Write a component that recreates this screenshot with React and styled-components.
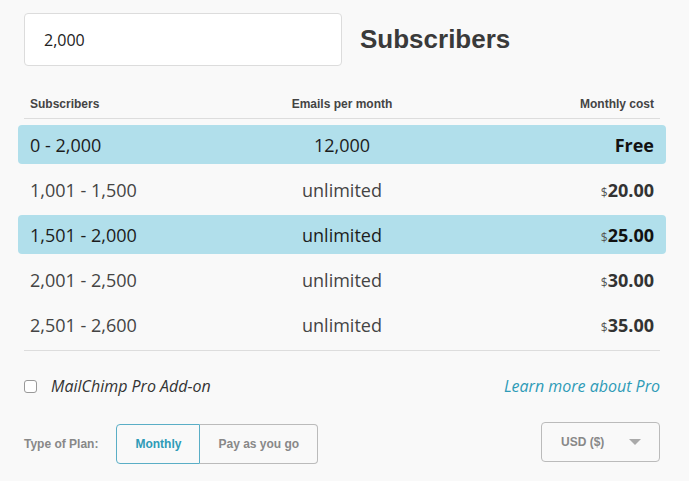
import React from "react";
import styled, { createGlobalStyle } from "styled-components";

const GlobalStyle = createGlobalStyle`
  body {
    margin: 0;
    background: #f9f9f9;
    font-family: "Open Sans", "Noto Sans", sans-serif;
    color: #333;
  }
`;

const plans = [
  { range: "0 - 2,000", emails: "12,000", cost: null, active: true },
  { range: "1,001 - 1,500", emails: "unlimited", cost: "20.00" },
  { range: "1,501 - 2,000", emails: "unlimited", cost: "25.00", active: true },
  { range: "2,001 - 2,500", emails: "unlimited", cost: "30.00" },
  { range: "2,501 - 2,600", emails: "unlimited", cost: "35.00" },
];

const Page = styled.div`
  width: 636px;
  padding: 13px 0 0 24px;
`;

const TopRow = styled.div`
  display: flex;
  align-items: center;
  gap: 18px;
`;

const CountInput = styled.input`
  box-sizing: border-box;
  width: 318px;
  height: 53px;
  padding: 0 19px;
  border: 1px solid #dcdcdc;
  border-radius: 4px;
  background: #fff;
  font-family: "Open Sans", sans-serif;
  font-size: 16px;
  color: #222;
  outline: none;
`;

const Title = styled.h1`
  margin: 0;
  font-family: "Liberation Sans", Arial, sans-serif;
  font-size: 26px;
  font-weight: bold;
  color: #3a3a3a;
`;

const Grid = styled.div`
  display: grid;
  grid-template-columns: 1fr 1fr 1fr;
  align-items: center;
  & > :nth-child(2) {
    text-align: center;
  }
  & > :nth-child(3) {
    text-align: right;
  }
`;

const HeadRow = styled(Grid)`
  margin-top: 24px;
  height: 28px;
  padding: 0 6px;
  border-bottom: 1px solid #ddd;
  font-family: "Liberation Sans", Arial, sans-serif;
  font-size: 12px;
  font-weight: bold;
  color: #444;
`;

const Row = styled(Grid)`
  margin: 6px -6px 0;
  height: 39px;
  padding: 0 12px;
  border-radius: 4px;
  background: ${(p) => (p.$active ? "#b1dfeb" : "transparent")};
  font-size: 18px;
  color: ${(p) => (p.$active ? "#1c1c1c" : "#444")};
`;

const Cost = styled.span`
  font-weight: bold;
  color: ${(p) => (p.$active ? "#111" : "#333")};
`;

const Dollar = styled.span`
  font-size: 12px;
  font-weight: normal;
  color: #555;
`;

const Rule = styled.div`
  margin-top: 6px;
  border-top: 1px solid #ddd;
`;

const AddOnRow = styled.div`
  display: flex;
  align-items: center;
  justify-content: space-between;
  margin-top: 23px;
  height: 24px;
  font-size: 16px;
  font-style: italic;
`;

const CheckLabel = styled.label`
  display: flex;
  align-items: center;
  gap: 14px;
  color: #333;
`;

const Check = styled.input`
  appearance: none;
  margin: 0;
  width: 13px;
  height: 13px;
  border: 1px solid #999;
  border-radius: 3px;
  background: #fff;
`;

const LearnLink = styled.a`
  color: #2e9bb7;
  text-decoration: none;
`;

const PlanRow = styled.div`
  display: flex;
  align-items: center;
  justify-content: space-between;
  margin-top: 24px;
  font-family: "Liberation Sans", Arial, sans-serif;
  font-size: 12px;
  font-weight: bold;
`;

const PlanType = styled.div`
  display: flex;
  align-items: center;
  gap: 18px;
  color: #888;
`;

const Segments = styled.div`
  display: flex;
`;

const Segment = styled.button`
  box-sizing: border-box;
  height: 40px;
  padding: 0 18px;
  font: inherit;
  background: transparent;
  color: ${(p) => (p.$active ? "#2e9bb7" : "#888")};
  border: 1px solid ${(p) => (p.$active ? "#5aaec6" : "#bbb")};
  border-left-width: ${(p) => (p.$active ? 1 : 0)}px;
  border-radius: ${(p) => (p.$active ? "4px 0 0 4px" : "0 4px 4px 0")};
`;

const Select = styled.div`
  box-sizing: border-box;
  display: flex;
  align-items: center;
  justify-content: space-between;
  width: 119px;
  height: 40px;
  margin-bottom: 3px;
  padding: 0 18px 0 19px;
  border: 1px solid #bbb;
  border-radius: 4px;
  color: #888;
`;

const Arrow = styled.span`
  width: 0;
  height: 0;
  border-left: 6px solid transparent;
  border-right: 6px solid transparent;
  border-top: 6px solid #aaa;
`;

export default function App() {
  return (
    <>
      <GlobalStyle />
      <Page>
        <TopRow>
          <CountInput defaultValue="2,000" />
          <Title>Subscribers</Title>
        </TopRow>

        <HeadRow>
          <span>Subscribers</span>
          <span>Emails per month</span>
          <span>Monthly cost</span>
        </HeadRow>

        {plans.map((p) => (
          <Row key={p.range} $active={p.active}>
            <span>{p.range}</span>
            <span>{p.emails}</span>
            <Cost $active={p.active}>
              {p.cost ? (
                <>
                  <Dollar>$</Dollar>
                  {p.cost}
                </>
              ) : (
                "Free"
              )}
            </Cost>
          </Row>
        ))}

        <Rule />

        <AddOnRow>
          <CheckLabel>
            <Check type="checkbox" />
            MailChimp Pro Add-on
          </CheckLabel>
          <LearnLink href="#">Learn more about Pro</LearnLink>
        </AddOnRow>

        <PlanRow>
          <PlanType>
            Type of Plan:
            <Segments>
              <Segment $active>Monthly</Segment>
              <Segment>Pay as you go</Segment>
            </Segments>
          </PlanType>
          <Select>
            USD ($)
            <Arrow />
          </Select>
        </PlanRow>
      </Page>
    </>
  );
}
